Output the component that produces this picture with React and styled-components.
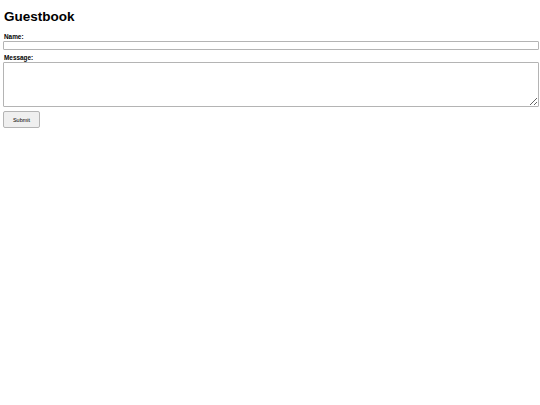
import styled, { createGlobalStyle } from 'styled-components';

const GlobalStyle = createGlobalStyle`
  body {
    margin: 0;
    background: #ffffff;
    font-family: "Liberation Sans", Arial, sans-serif;
    color: #000;
  }
`;

const Page = styled.div`
  padding: 0 1px 0 3px;
  display: flex;
  flex-direction: column;
`;

const Title = styled.h1`
  font-size: 13.5px;
  font-weight: bold;
  margin: 9px 0 9px 1px;
  line-height: 15px;
`;

const Form = styled.form`
  display: flex;
  flex-direction: column;
`;

const Label = styled.label`
  font-size: 6.4px;
  font-weight: bold;
  line-height: 7px;
  margin-left: 1px;
`;

const Input = styled.input`
  box-sizing: border-box;
  width: 100%;
  height: 9px;
  margin: 1px 0 4px;
  border: 1px solid #b4b4b4;
  border-radius: 1px;
  padding: 0;
  font-family: inherit;
  font-size: 6px;
`;

const TextArea = styled.textarea`
  box-sizing: border-box;
  width: 100%;
  height: 45px;
  margin: 1px 0 4px;
  border: 1px solid #b4b4b4;
  border-radius: 1px;
  padding: 1px;
  font-family: inherit;
  font-size: 6px;
  resize: vertical;
`;

const Button = styled.button`
  align-self: flex-start;
  width: 37px;
  height: 17px;
  padding: 0;
  background: #efefef;
  border: 1px solid #b4b4b4;
  border-radius: 2px;
  font-family: inherit;
  font-size: 5.5px;
  color: #000;
`;

const App = () => {
  return (
    <>
      <GlobalStyle />
      <Page>
        <Title>Guestbook</Title>
        <Form onSubmit={(e) => e.preventDefault()}>
          <Label htmlFor='name'>Name:</Label>
          <Input id='name' type='text' />
          <Label htmlFor='message'>Message:</Label>
          <TextArea id='message' />
          <Button type='submit'>Submit</Button>
        </Form>
      </Page>
    </>
  );
};

export default App;
